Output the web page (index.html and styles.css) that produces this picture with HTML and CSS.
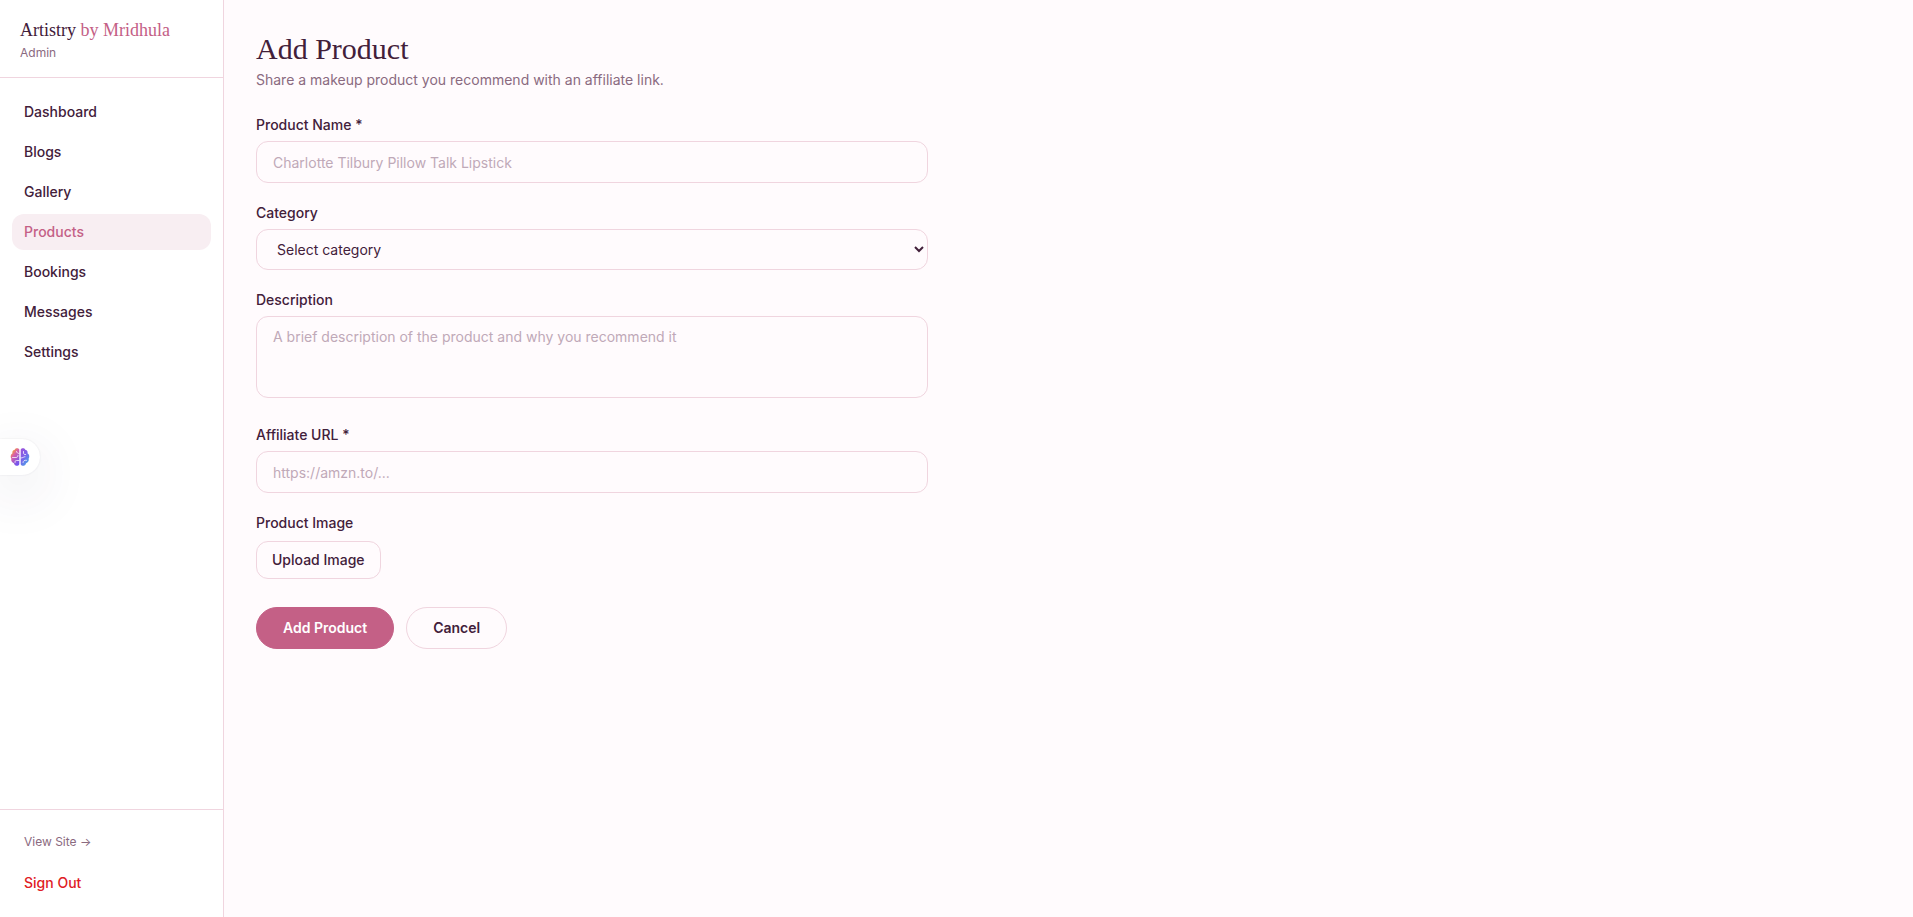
FILE: index.html
```html
<!DOCTYPE html>
<html lang="en">
<head>
<meta charset="utf-8">
<title>Add Product</title>
<link rel="stylesheet" href="styles.css">
</head>
<body>
<div class="layout">
  <aside class="sidebar">
    <header class="brand">
      <div class="brand-name">Artistry <span class="brand-accent">by Mridhula</span></div>
      <div class="brand-role">Admin</div>
    </header>
    <nav class="nav">
      <a class="nav-link" href="#">Dashboard</a>
      <a class="nav-link" href="#">Blogs</a>
      <a class="nav-link" href="#">Gallery</a>
      <a class="nav-link active" href="#">Products</a>
      <a class="nav-link" href="#">Bookings</a>
      <a class="nav-link" href="#">Messages</a>
      <a class="nav-link" href="#">Settings</a>
    </nav>
    <footer class="sidebar-footer">
      <a class="view-site" href="#">View Site →</a>
      <button class="sign-out" type="button">Sign Out</button>
    </footer>
  </aside>

  <main class="main">
    <h1 class="title">Add Product</h1>
    <p class="subtitle">Share a makeup product you recommend with an affiliate link.</p>
    <form class="form">
      <div class="field">
        <label class="label" for="name">Product Name *</label>
        <input class="control" id="name" type="text" placeholder="Charlotte Tilbury Pillow Talk Lipstick">
      </div>
      <div class="field">
        <label class="label" for="category">Category</label>
        <select class="control select" id="category"><option>Select category</option></select>
      </div>
      <div class="field description">
        <label class="label" for="description">Description</label>
        <textarea class="control textarea" id="description" placeholder="A brief description of the product and why you recommend it"></textarea>
      </div>
      <div class="field">
        <label class="label" for="url">Affiliate URL *</label>
        <input class="control" id="url" type="url" placeholder="https://amzn.to/...">
      </div>
      <div class="field image-field">
        <span class="label" id="image-label">Product Image</span>
        <button class="upload" type="button" aria-describedby="image-label">Upload Image</button>
      </div>
      <div class="actions">
        <button class="btn primary" type="submit">Add Product</button>
        <button class="btn secondary" type="button">Cancel</button>
      </div>
    </form>
  </main>
</div>

<button class="assistant" type="button" aria-label="Assistant">
  <svg class="brain" viewBox="0 0 20 20" aria-hidden="true">
    <defs>
      <linearGradient id="left" x1="0" y1="0" x2="0.6" y2="1">
        <stop offset="0.15" stop-color="#f9a82c"/>
        <stop offset="0.45" stop-color="#d860a8"/>
        <stop offset="1" stop-color="#7455ee"/>
      </linearGradient>
      <linearGradient id="right" x1="0" y1="0" x2="0.7" y2="1">
        <stop offset="0" stop-color="#a052d8"/>
        <stop offset="0.5" stop-color="#7a62ea"/>
        <stop offset="1" stop-color="#48a4e8"/>
      </linearGradient>
    </defs>
    <path fill="url(#left)" d="M9.300 2.500C8.400 .8 5.600.8 4.700 2.700 2.800 3 2 4.700 2.500 6.300.6 7.500.2 10 1.300 11.600.8 13.900 2 15.800 3.900 16.200 4.800 19.200 8.200 19.700 9.300 17.300Z"/>
    <path fill="url(#right)" d="M10.700 2.500C11.600.8 14.400.8 15.300 2.700 17.200 3 18 4.700 17.500 6.300 19.400 7.500 19.800 10 18.700 11.600 19.200 13.900 18 15.800 16.100 16.200 15.200 19.200 11.800 19.700 10.700 17.300Z"/>
    <path fill="none" stroke="#fff" stroke-opacity=".75" stroke-linecap="round" d="M9 6.500C7.700 6.500 6.700 5.800 6.500 4.500M2.500 10.500H6C7.500 10.500 8 9.500 8 8.500M9 13.500H6.500C5.300 13.500 4.800 14.300 5 15.500M13.500 4.500V6C13.500 7.300 14.500 7.800 15.700 7.500M11 11C13 11 13.500 9.700 15 9.700M13 15.500C13 13.800 14.500 13 16.500 13.300"/>
  </svg>
</button>
</body>
</html>
```
FILE: styles.css
```css
* { box-sizing: border-box; }

body {
  margin: 0;
  background: #fffbfd;
  color: #42203a;
  font: 14px/20px Inter, "Open Sans", sans-serif;
}

button, input, select, textarea { font: inherit; color: inherit; }
button { cursor: pointer; }
a { color: inherit; text-decoration: none; }

.layout { display: flex; min-height: 100vh; }

.sidebar {
  display: flex;
  flex-direction: column;
  flex: none;
  width: 224px;
  background: #fff;
  border-right: 1px solid #f0d5df;
}

.brand { padding: 16px 20px; border-bottom: 1px solid #f0d5df; }
.brand-name { font: 500 18px/28px "Liberation Serif", serif; }
.brand-accent { color: #c46086; }
.brand-role { font-size: 12px; line-height: 17px; color: #8a6a80; }

.nav { display: flex; flex: 1; flex-direction: column; gap: 4px; padding: 16px 12px; }
.nav-link { padding: 8px 12px; border-radius: 12px; font-weight: 500; }
.nav-link.active { background: #f8eef2; color: #c46086; }

.sidebar-footer {
  display: flex;
  flex-direction: column;
  gap: 7px;
  padding: 16px 12px;
  border-top: 1px solid #f0d5df;
}
.view-site { padding: 8px 12px; font-size: 12px; line-height: 16px; color: #8a6a80; }
.sign-out {
  padding: 8px 12px;
  border: 0;
  background: none;
  color: #e01b24;
  font-weight: 500;
  text-align: left;
}

.main { flex: 1; min-width: 0; padding: 32px; }
.title { margin: 0; font: 500 30px/34px "Liberation Serif", serif; }
.subtitle { margin: 4px 0 25px; color: #8a6a80; }

.form { display: flex; flex-direction: column; gap: 20px; max-width: 672px; }
.field { display: flex; flex-direction: column; gap: 6px; }
.description { padding-bottom: 7px; }
.image-field { gap: 8px; align-items: flex-start; }
.label { font-weight: 500; }

.control {
  width: 100%;
  height: 42px;
  padding: 10px 16px;
  border: 1px solid #f0d5df;
  border-radius: 12px;
  background: #fffbfd;
}
.control::placeholder { color: #bfa9b8; opacity: 1; }
.select { height: 41px; }
.textarea { display: block; height: 82px; resize: none; }

.upload {
  padding: 8px 15px;
  border: 1px solid #f0d5df;
  border-radius: 12px;
  background: none;
  font-weight: 500;
}

.actions { display: flex; gap: 12px; padding-top: 8px; }
.btn { padding: 10px 26px; border: 1px solid #f0d5df; border-radius: 21px; font-weight: 600; }
.primary { border-color: #c46086; background: #c46086; color: #fff; }
.secondary { background: none; }

.assistant {
  position: fixed;
  top: 439px;
  left: 0;
  display: flex;
  align-items: center;
  justify-content: flex-end;
  width: 40px;
  height: 36px;
  padding: 0 10px 0 0;
  border: 0;
  border-radius: 0 18px 18px 0;
  background: #fff;
  box-shadow: 0 0 2px rgba(60, 40, 90, .12), 0 16px 56px rgba(60, 40, 90, .14);
}
.brain { display: block; width: 20px; height: 20px; }
```
